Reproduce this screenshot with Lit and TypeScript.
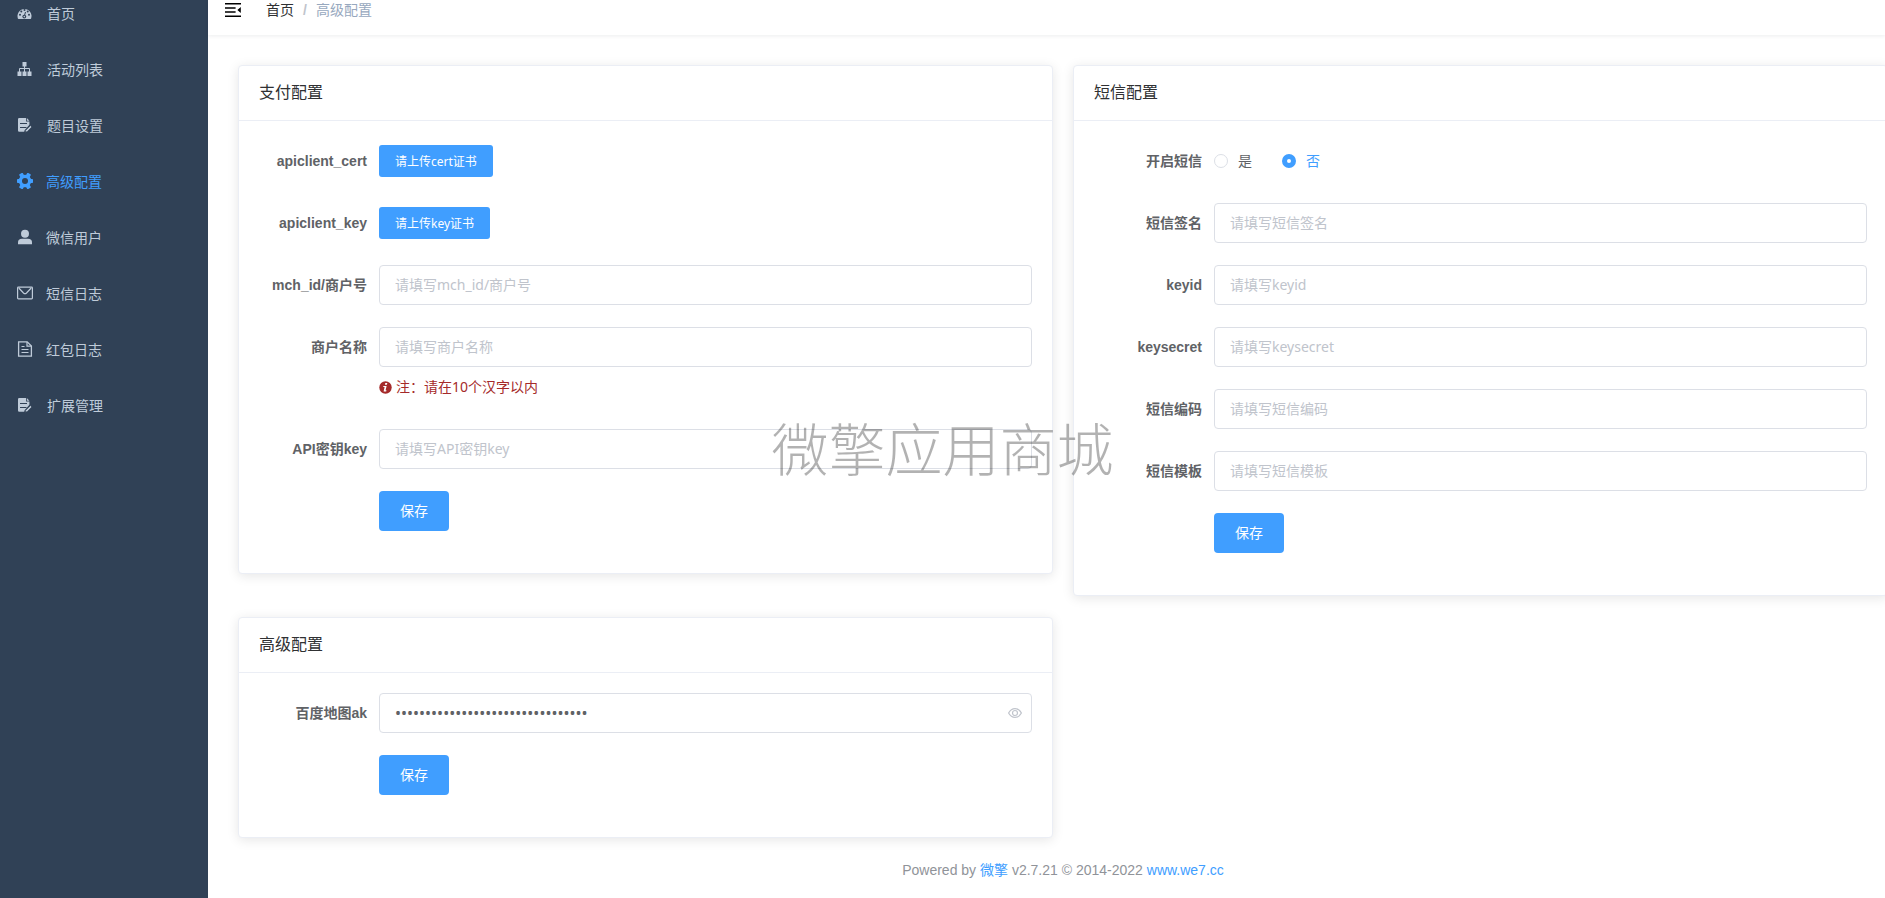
import { LitElement, html, css, svg, nothing } from "lit";
import { customElement, state } from "lit/decorators.js";
import { classMap } from "lit/directives/class-map.js";

const sheetIcon = svg`
  <path d="M1 1.200Q1 0 2.200 0H9v3.600h3.400v3.200L9.600 9.900l-2 2.300-.3 1.600H2.200Q1 13.800 1 12.600z" fill="currentColor"/>
  <path d="M9.800 0l2.600 2.800H9.800z" fill="currentColor"/>
  <path d="M3 5.500h7M3 9.500h6.500" stroke="#304156" stroke-width="1"/>
  <path d="M8.200 14.200l.4-1.900 4.800-4.800 1.500 1.500-4.800 4.800z" fill="currentColor" stroke="#304156" stroke-width=".8"/>`;

const icons = {
  dashboard: svg`
    <path d="M.900 12.400A7 7 0 1 1 14.100 12.400L13.600 13H1.400z" fill="currentColor"/>
    <g fill="#304156">
      <circle cx="3" cy="8.800" r="1"/><circle cx="4.300" cy="5.500" r="1"/>
      <circle cx="7.500" cy="4" r="1"/><circle cx="10.700" cy="5.500" r="1"/>
      <circle cx="12" cy="8.800" r="1"/><circle cx="7.300" cy="10.600" r="1.900"/>
    </g>
    <path d="M7.200 10.600l1.300-4.600" stroke="#304156" stroke-width="1"/>
    <circle cx="7.300" cy="10.600" r=".8" fill="currentColor"/>`,
  tree: svg`
    <g fill="currentColor">
      <rect x="5.500" y="0" width="4" height="4.500"/>
      <rect x=".5" y="9.500" width="4" height="4.500"/>
      <rect x="5.500" y="9.500" width="4" height="4.500"/>
      <rect x="10.500" y="9.500" width="4" height="4.500"/>
    </g>
    <path d="M7.500 4v6M2.500 10V6.500h10V10" stroke="currentColor" fill="none" stroke-width="1"/>`,
  sheet: sheetIcon,
  gear: svg`
    <g fill="currentColor">
      <circle cx="8" cy="8" r="6.300"/>
      <rect x="0" y="5.900" width="16" height="4.200" rx=".8"/>
      <rect x="-.6" y="5.900" width="17.200" height="4.200" rx=".8" transform="rotate(60 8 8)"/>
      <rect x="-.6" y="5.900" width="17.200" height="4.200" rx=".8" transform="rotate(120 8 8)"/>
    </g>
    <circle cx="8" cy="8" r="3" fill="#304156"/>`,
  user: svg`
    <circle cx="8" cy="4.800" r="4" fill="currentColor"/>
    <path d="M1 15.300v-1.800Q1 9.800 5 9.800h6q4 0 4 3.700v1.800z" fill="currentColor"/>`,
  mail: svg`
    <rect x=".6" y="2.200" width="14.800" height="11.600" rx=".8" fill="none" stroke="currentColor" stroke-width="1.200"/>
    <path d="M1.800 3l4.700 5q1.500 1.400 3 0l4.700-5" fill="none" stroke="currentColor" stroke-width="1.200"/>`,
  document: svg`
    <path d="M1.600.8h8.600l4.200 4.200v10.200H1.600z" fill="none" stroke="currentColor" stroke-width="1.300"/>
    <path d="M10 1v4.200h4.200M4.500 5.500h3M4.500 8.500h7M4.500 11.500h7" fill="none" stroke="currentColor" stroke-width="1.200"/>`,
};

interface MenuItem {
  label: string;
  icon: keyof typeof icons;
  size: number;
}

const menu: MenuItem[] = [
  { label: "首页", icon: "dashboard", size: 15 },
  { label: "活动列表", icon: "tree", size: 15 },
  { label: "题目设置", icon: "sheet", size: 15 },
  { label: "高级配置", icon: "gear", size: 16 },
  { label: "微信用户", icon: "user", size: 16 },
  { label: "短信日志", icon: "mail", size: 16 },
  { label: "红包日志", icon: "document", size: 16 },
  { label: "扩展管理", icon: "sheet", size: 15 },
];

@customElement("app-root")
export class AppRoot extends LitElement {
  @state() private active = "高级配置";
  @state() private smsEnabled = false;
  @state() private showKey = false;

  static styles = css`
    :host {
      display: flex;
      position: relative;
      min-height: 100vh;
      overflow: hidden;
      background: #fff;
      color: #303133;
      font-family: "Liberation Sans", "Noto Sans CJK SC", sans-serif;
      font-size: 14px;
    }
    * {
      box-sizing: border-box;
    }
    a {
      color: inherit;
      text-decoration: none;
    }
    svg {
      display: block;
      flex: none;
    }
    .sidebar {
      flex: 0 0 208px;
      background: #304156;
      overflow: hidden;
    }
    .menu {
      margin: -15px 0 0;
      padding: 0;
      list-style: none;
    }
    .item {
      display: flex;
      align-items: center;
      height: 56px;
      padding-left: 17px;
      gap: 13px;
      color: #bfcbd9;
    }
    .item.glyph {
      padding-left: 17px;
      gap: 15px;
    }
    .item.active {
      color: #409eff;
    }
    .page {
      flex: 1;
      min-width: 0;
    }
    .navbar {
      display: flex;
      align-items: center;
      height: 35px;
      padding: 0 17px 16px;
      gap: 25px;
      box-shadow: 0 1px 4px rgba(0, 21, 41, 0.08);
    }
    .fold {
      padding: 0;
      border: 0;
      background: none;
      color: #000;
    }
    .crumbs {
      display: flex;
      gap: 9px;
      line-height: 20px;
    }
    .crumbs .sep {
      color: #c0c4cc;
      font-weight: 700;
    }
    .crumbs .here {
      color: #97a8be;
    }
    .cards {
      display: grid;
      grid-template-columns: 1fr 1fr;
      gap: 21px 20px;
      align-items: start;
      margin: 30px -3px 0 30px;
    }
    .card {
      border: 1px solid #ebeef5;
      border-radius: 4px;
      background: #fff;
      box-shadow: 0 2px 12px rgba(0, 0, 0, 0.1);
    }
    .title {
      height: 55px;
      margin: 0;
      padding: 0 20px;
      border-bottom: 1px solid #ebeef5;
      font-size: 16px;
      font-weight: 400;
      line-height: 54px;
    }
    .form {
      margin: 0;
      padding: 20px 20px 42px;
      display: grid;
      gap: 22px;
    }
    .row {
      display: grid;
      grid-template-columns: 120px 1fr;
      line-height: 40px;
    }
    .label {
      padding-right: 12px;
      text-align: right;
      font-weight: 700;
      color: #606266;
    }
    .control {
      grid-column: 2;
      position: relative;
      display: flex;
      align-items: center;
      min-height: 40px;
      color: #606266;
    }
    .input,
    .btn,
    .hint {
      font-family: "Noto Sans", "Noto Sans CJK SC", sans-serif;
      font-size: 14px;
    }
    .input {
      width: 100%;
      height: 40px;
      padding: 0 15px 2px;
      border: 1px solid #dcdfe6;
      border-radius: 4px;
      background: #fff;
      color: #606266;
      outline: none;
    }
    .input:focus {
      border-color: #409eff;
    }
    .input::placeholder {
      color: #c0c4cc;
    }
    .input.secret {
      padding: 0 40px 0 15px;
      font-size: 16px;
    }
    .btn {
      height: 40px;
      padding: 0 21px 2px;
      border: 0;
      border-radius: 4px;
      background: #409eff;
      color: #fff;
      font-weight: 400;
      cursor: pointer;
    }
    .btn.small {
      height: 32px;
      padding: 0 16px;
      border-radius: 3px;
      font-size: 12px;
    }
    .hint {
      grid-column: 2;
      display: flex;
      align-items: center;
      gap: 4px;
      color: #a52a2a;
    }
    .eye {
      position: absolute;
      right: 10px;
      padding: 0;
      border: 0;
      background: none;
      color: #c0c4cc;
      cursor: pointer;
    }
    .radio {
      display: flex;
      align-items: center;
      gap: 10px;
      margin-right: 30px;
    }
    .radio.on {
      color: #409eff;
    }
    .dot {
      appearance: none;
      width: 14px;
      height: 14px;
      margin: 0;
      border: 1px solid #dcdfe6;
      border-radius: 50%;
      background: #fff;
    }
    .dot:checked {
      border: 5px solid #409eff;
    }
    .footer {
      margin: 21px -3px 0 30px;
      text-align: center;
      color: #909399;
      line-height: 22px;
    }
    .footer a {
      color: #409eff;
    }
    .watermark {
      position: absolute;
      inset: 0 0 6px;
      display: flex;
      align-items: center;
      justify-content: center;
      font-family: "Noto Sans CJK SC", sans-serif;
      font-size: 57px;
      font-weight: 300;
      line-height: 1;
      white-space: nowrap;
      color: rgba(0, 0, 0, 0.3);
      pointer-events: none;
    }
  `;

  private field(id: string, label: string, placeholder: string, hint?: unknown) {
    return html`<div class="row">
      <label class="label" for=${id}>${label}</label>
      <div class="control"><input class="input" id=${id} type="text" placeholder=${placeholder} /></div>
      ${hint ?? nothing}
    </div>`;
  }

  private upload(id: string, label: string, text: string) {
    return html`<div class="row">
      <label class="label" for=${id}>${label}</label>
      <div class="control"><button class="btn small" id=${id} type="button">${text}</button></div>
    </div>`;
  }

  private save() {
    return html`<div class="row">
      <div class="control"><button class="btn" type="button">保存</button></div>
    </div>`;
  }

  private radio(id: string, text: string, value: boolean) {
    const on = this.smsEnabled === value;
    return html`<label class=${classMap({ radio: true, on })} for=${id}>
      <input class="dot" id=${id} type="radio" name="sms" .checked=${on}
        @change=${() => (this.smsEnabled = value)} />${text}
    </label>`;
  }

  render() {
    return html`
      <nav class="sidebar">
        <ul class="menu">
          ${menu.map(
            (m) => html`<li>
              <a class=${classMap({ item: true, glyph: m.size === 15, active: m.label === this.active })}
                href="#" @click=${(e: Event) => { e.preventDefault(); this.active = m.label; }}>
                <svg width=${m.size} height=${m.size} viewBox="0 0 ${m.size} ${m.size}">${icons[m.icon]}</svg>
                <span>${m.label}</span>
              </a>
            </li>`
          )}
        </ul>
      </nav>
      <div class="page">
        <header class="navbar">
          <button class="fold" type="button" aria-label="折叠菜单">
            <svg width="16" height="14" viewBox="0 0 16 14" fill="currentColor">
              <path d="M0 0h16v1.600H0zM0 4.200h10.600v1.500H0zM0 8.200h10.600v1.500H0zM0 12.400h16V14H0zM15.800 4v6L12.400 7z" />
            </svg>
          </button>
          <div class="crumbs">
            <a href="#">首页</a><span class="sep">/</span><span class="here">高级配置</span>
          </div>
        </header>
        <main class="cards">
          <section class="card">
            <h2 class="title">支付配置</h2>
            <form class="form">
              ${this.upload("cert", "apiclient_cert", "请上传cert证书")}
              ${this.upload("key", "apiclient_key", "请上传key证书")}
              ${this.field("mch", "mch_id/商户号", "请填写mch_id/商户号")}
              ${this.field("merchant", "商户名称", "请填写商户名称", html`<div class="hint">
                <svg width="13" height="13" viewBox="0 0 13 13">
                  <circle cx="6.500" cy="6.500" r="6.200" fill="currentColor" />
                  <path d="M6.300 2h2l-.4 1.700h-2zM4.400 5h3.200l-1 4.300h.9l-.3 1.100H4.600l1-4.300h-1.400z" fill="#fff" />
                </svg>
                <span>注：请在10个汉字以内</span>
              </div>`)}
              ${this.field("apikey", "API密钥key", "请填写API密钥key")}
              ${this.save()}
            </form>
          </section>
          <section class="card">
            <h2 class="title">短信配置</h2>
            <form class="form">
              <div class="row">
                <span class="label">开启短信</span>
                <div class="control">${this.radio("sms-on", "是", true)}${this.radio("sms-off", "否", false)}</div>
              </div>
              ${this.field("sign", "短信签名", "请填写短信签名")}
              ${this.field("keyid", "keyid", "请填写keyid")}
              ${this.field("keysecret", "keysecret", "请填写keysecret")}
              ${this.field("code", "短信编码", "请填写短信编码")}
              ${this.field("template", "短信模板", "请填写短信模板")}
              ${this.save()}
            </form>
          </section>
          <section class="card">
            <h2 class="title">高级配置</h2>
            <form class="form">
              <div class="row">
                <label class="label" for="ak">百度地图ak</label>
                <div class="control">
                  <input class="input secret" id="ak" type=${this.showKey ? "text" : "password"}
                    autocomplete="off" .value=${"x".repeat(32)} />
                  <button class="eye" type="button" aria-label="显示" @click=${() => (this.showKey = !this.showKey)}>
                    <svg width="14" height="14" viewBox="0 0 14 14" fill="none" stroke="currentColor" stroke-width="1.200">
                      <path d="M.6 7Q3 2.600 7 2.600T13.400 7Q11 11.400 7 11.400T.6 7z" />
                      <circle cx="7" cy="7" r="2.500" />
                    </svg>
                  </button>
                </div>
              </div>
              ${this.save()}
            </form>
          </section>
        </main>
        <footer class="footer">
          Powered by <a href="#">微擎</a> v2.7.21 © 2014-2022 <a href="#">www.we7.cc</a>
        </footer>
      </div>
      <div class="watermark">微擎应用商城</div>
    `;
  }
}
